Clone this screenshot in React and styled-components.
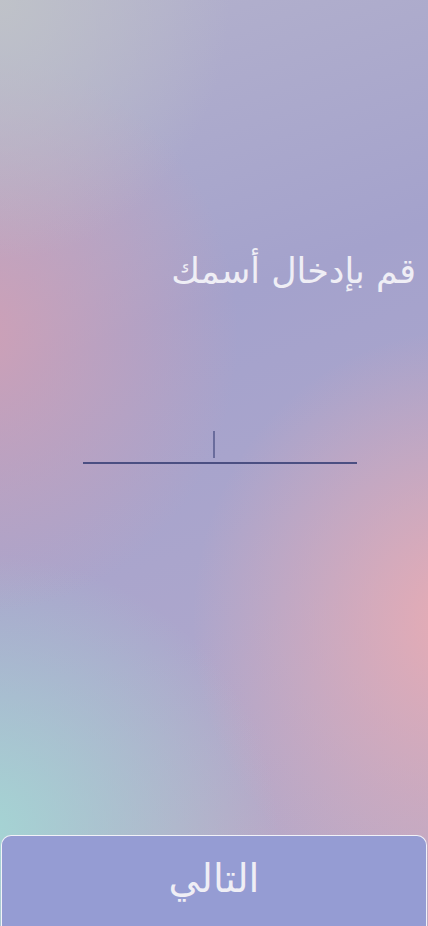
import React from 'react';
import styled, { createGlobalStyle } from 'styled-components';

const Global = createGlobalStyle`
  html, body {
    margin: 0;
    padding: 0;
    height: 100%;
  }
  body {
    font-family: "DejaVu Sans", "Noto Sans", sans-serif;
  }
  #root {
    height: 100%;
  }
`;

const Screen = styled.div`
  direction: rtl;
  width: 428px;
  height: 926px;
  display: flex;
  flex-direction: column;
  overflow: hidden;
  background:
    radial-gradient(ellipse 230px 260px at 0% 0%, rgba(192, 196, 200, 0.9), rgba(192, 196, 200, 0) 100%),
    radial-gradient(ellipse 260px 280px at -5% 36%, rgba(210, 160, 180, 0.9), rgba(210, 160, 180, 0) 100%),
    radial-gradient(ellipse 270px 290px at 108% 67%, rgba(232, 172, 180, 1), rgba(232, 172, 180, 0) 100%),
    radial-gradient(ellipse 300px 280px at -5% 90%, rgba(164, 214, 212, 1), rgba(164, 214, 212, 0) 100%),
    linear-gradient(160deg, #b4b2cc 0%, #a4a2cc 35%, #aca6cc 65%, #c0aac4 100%);
`;

const Content = styled.div`
  flex: 1;
  display: flex;
  flex-direction: column;
  padding: 247px 12px 0 12px;
`;

const Title = styled.h1`
  margin: 0;
  font-size: 35px;
  font-weight: normal;
  color: #efeef5;
  line-height: 48px;
  text-align: right;
`;

const Field = styled.div`
  margin: 135px 59px 0 auto;
  width: 274px;
  height: 34px;
  border-bottom: 2px solid #4b4f82;
  display: flex;
  justify-content: center;
  align-items: flex-end;
  padding-bottom: 4px;
  box-sizing: border-box;
`;

const Caret = styled.span`
  display: block;
  width: 2px;
  height: 27px;
  margin-right: 12px;
  background: #6a6c9c;
`;

const NextButton = styled.button`
  direction: rtl;
  margin: 0 1px;
  height: 91px;
  background: #959cd3;
  border: 1px solid #f2f2f8;
  border-bottom: none;
  border-radius: 10px 10px 0 0;
  color: #efeef5;
  font-family: "DejaVu Sans", "Noto Sans", sans-serif;
  font-size: 39px;
  padding: 0 0 6px 0;
  cursor: pointer;
`;

export default function App() {
  return (
    <Screen>
      <Global />
      <Content>
        <Title>قم بإدخال أسمك</Title>
        <Field>
          <Caret />
        </Field>
      </Content>
      <NextButton>التالي</NextButton>
    </Screen>
  );
}
